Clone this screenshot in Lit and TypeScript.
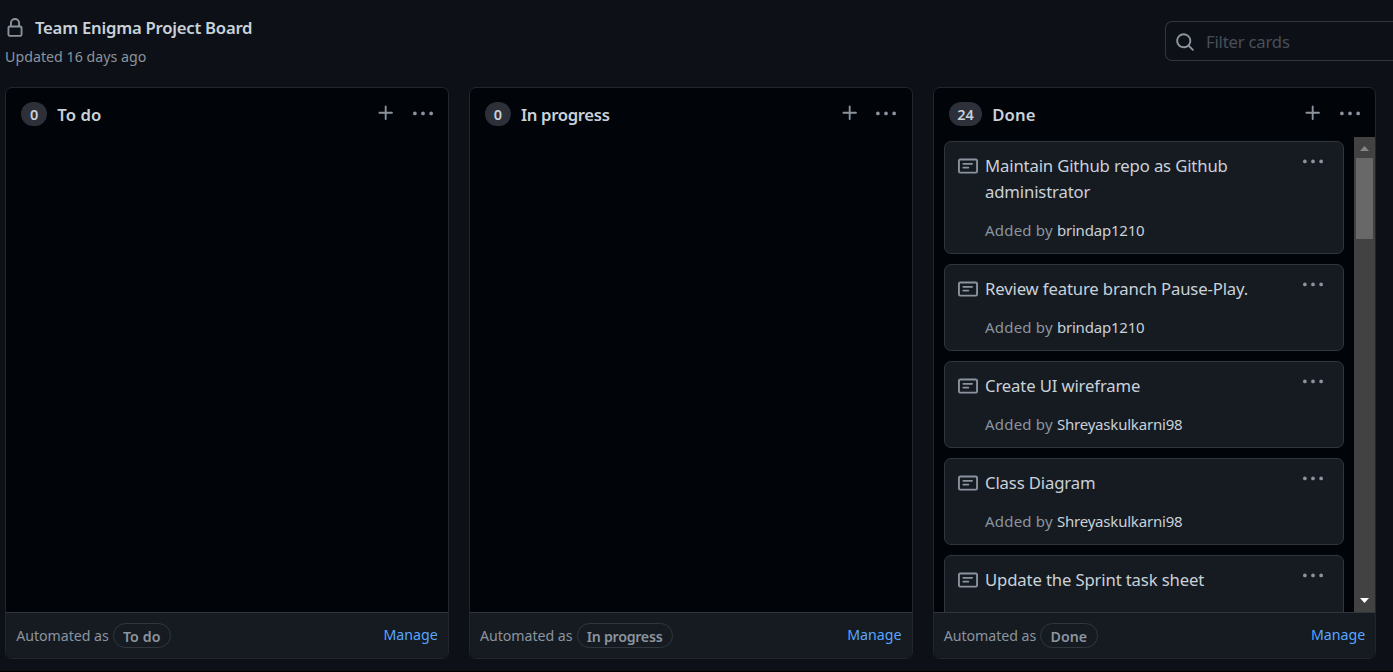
import { LitElement, html, css, svg, nothing } from "lit";
import { customElement, property } from "lit/decorators.js";

const ICONS: Record<string, string> = {
  lock: "M4 4v2h-.25A1.75 1.75 0 002 7.75v5.5c0 .966.784 1.75 1.75 1.75h8.5A1.75 1.75 0 0014 13.25v-5.5A1.75 1.75 0 0012.25 6H12V4a4 4 0 10-8 0zm6.5 2V4a2.5 2.5 0 10-5 0v2h5zM12 7.5h.25a.25.25 0 01.25.25v5.5a.25.25 0 01-.25.25h-8.5a.25.25 0 01-.25-.25v-5.5a.25.25 0 01.25-.25H12z",
  search: "M11.5 7a4.499 4.499 0 11-8.998 0A4.499 4.499 0 0111.5 7zm-.82 4.74a6 6 0 111.06-1.06l3.04 3.04a.75.75 0 11-1.06 1.06l-3.04-3.04z",
  plus: "M7.75 2a.75.75 0 01.75.75V7h4.25a.75.75 0 110 1.5H8.5v4.25a.75.75 0 11-1.5 0V8.5H2.75a.75.75 0 010-1.5H7V2.75A.75.75 0 017.75 2z",
  kebab: "M8 9a1.5 1.5 0 100-3 1.5 1.5 0 000 3zM1.5 9a1.5 1.5 0 100-3 1.5 1.5 0 000 3zm13 0a1.5 1.5 0 100-3 1.5 1.5 0 000 3z",
  note: "M0 3.75C0 2.784.784 2 1.75 2h12.5c.966 0 1.75.784 1.75 1.75v8.5A1.75 1.75 0 0114.25 14H1.75A1.75 1.75 0 010 12.25v-8.5zm1.75-.25a.25.25 0 00-.25.25v8.5c0 .138.112.25.25.25h12.5a.25.25 0 00.25-.25v-8.5a.25.25 0 00-.25-.25H1.75zM3.5 6.25a.75.75 0 01.75-.75h7a.75.75 0 010 1.5h-7a.75.75 0 01-.75-.75zm.75 2.25a.75.75 0 000 1.5h4a.75.75 0 000-1.5h-4z",
};

const icon = (name: string) => html`<svg class="icon ${name}" viewBox="0 0 16 16" width="20" height="20" aria-hidden="true">
  ${svg`<path fill-rule="evenodd" d=${ICONS[name]}></path>`}
</svg>`;

interface Card {
  title: string;
  author?: string;
}

interface Column {
  name: string;
  count: number;
  tracking: number;
  cards: Card[];
}

const COLUMNS: Column[] = [
  { name: "To do", count: 0, tracking: 0.1, cards: [] },
  { name: "In progress", count: 0, tracking: -0.35, cards: [] },
  {
    name: "Done",
    count: 24,
    tracking: 0.05,
    cards: [
      { title: "Maintain Github repo as Github administrator", author: "brindap1210" },
      { title: "Review feature branch Pause-Play.", author: "brindap1210" },
      { title: "Create UI wireframe", author: "Shreyaskulkarni98" },
      { title: "Class Diagram", author: "Shreyaskulkarni98" },
      { title: "Update the Sprint task sheet" },
    ],
  },
];

const shared = css`
  * { box-sizing: border-box; }
  .icon { display: block; flex: none; fill: #8b949e; }
`;

@customElement("project-card")
class ProjectCard extends LitElement {
  @property({ attribute: false }) card!: Card;

  static styles = [shared, css`
    :host { display: block; flex: none; }
    .card {
      display: flex;
      align-items: flex-start;
      min-height: 87px;
      padding: 10px 20px 8px 13px;
      border: 1px solid #30363d;
      border-radius: 7px;
      background: #161b22;
    }
    .note { margin-top: 4px; }
    .body { flex: 1; padding: 1px 0 0 7.25px; }
    .title { padding-right: 40px; font-size: 16.7px; line-height: 26px; letter-spacing: -0.14px; color: #c9d1d9; }
    .meta { margin-top: 14px; font-size: 15px; line-height: 22px; padding-bottom: 4px; letter-spacing: 0.2px; color: #8b949e; white-space: nowrap; }
    .author { letter-spacing: -0.2px; color: #c9d1d9; }
  `];

  render() {
    return html`<article class="card">
      ${icon("note")}
      <div class="body">
        <div class="title">${this.card.title}</div>
        ${this.card.author
          ? html`<div class="meta">Added by <span class="author">${this.card.author}</span></div>`
          : nothing}
      </div>
      ${icon("kebab")}
    </article>`;
  }
}

@customElement("project-column")
class ProjectColumn extends LitElement {
  @property({ attribute: false }) column!: Column;

  static styles = [shared, css`
    :host { display: block; flex: none; width: 443.5px; height: 572px; }
    .column {
      display: flex;
      flex-direction: column;
      height: 100%;
      border: 1px solid #21262d;
      border-radius: 7px;
      background: #010409;
      overflow: hidden;
    }
    .head { display: flex; flex: none; align-items: flex-start; height: 49px; padding: 14px 15px 0; }
    .count {
      min-width: 26px;
      height: 24px;
      padding: 0 8.5px;
      border-radius: 12px;
      background: #2d3039;
      font-size: 14.5px;
      font-weight: 600;
      line-height: 24px;
      text-align: center;
      color: #c9d1d9;
    }
    .name { flex: 1; padding-left: 10px; font-size: 16.7px; font-weight: 600; line-height: 26px; color: #c9d1d9; }
    .head .plus { margin-top: 1px; margin-right: 16.75px; }
    .head .kebab { margin-top: 2px; margin-right: 0.15px; }
    .scroll { display: flex; flex: 1; min-height: 0; }
    .list { display: flex; flex: 1; flex-direction: column; gap: 10px; min-height: 0; padding: 4px 10px 0; overflow: hidden; }
    .bar { display: flex; flex: none; flex-direction: column; align-items: center; width: 21px; background: #424242; }
    .arrow { display: block; flex: none; }
    .up { fill: #868686; }
    .down { fill: #fff; margin-top: auto; }
    .thumb { width: 17px; height: 81px; background: #686868; }
    .foot {
      display: flex;
      flex: none;
      align-items: flex-start;
      height: 46px;
      padding: 10px 10px 0;
      border-top: 1px solid #30363d;
      background: #161b22;
      font-size: 14.2px;
      line-height: 26px;
      color: #8b949e;
    }
    .auto { letter-spacing: -0.05px; }
    .pill {
      height: 25px;
      margin-left: 4.25px;
      padding: 0 9.5px 0 9px;
      border: 1px solid #30363d;
      border-radius: 13px;
      font-weight: 600;
      line-height: 25px;
    }
    .manage { margin-left: auto; line-height: 24px; color: #58a6ff; }
  `];

  render() {
    const c = this.column;
    const tracking = (scale: number) => `letter-spacing: ${c.tracking * scale}px`;
    return html`<section class="column">
      <header class="head">
        <span class="count">${c.count}</span>
        <span class="name" style=${tracking(1)}>${c.name}</span>
        ${icon("plus")}${icon("kebab")}
      </header>
      <div class="scroll">
        <div class="list">
          ${c.cards.map((card) => html`<project-card .card=${card}></project-card>`)}
        </div>
        ${c.cards.length
          ? html`<div class="bar">
              <svg class="arrow up" width="21" height="21" viewBox="0 0 21 21"><path d="M6 14h9L10.5 9z"></path></svg>
              <div class="thumb"></div>
              <svg class="arrow down" width="21" height="21" viewBox="0 0 21 21"><path d="M6 7h9l-4.500 5z"></path></svg>
            </div>`
          : nothing}
      </div>
      <footer class="foot">
        <span class="auto">Automated as</span>
        <span class="pill" style=${tracking(0.75)}>${c.name}</span>
        <span class="manage">Manage</span>
      </footer>
    </section>`;
  }
}

@customElement("app-root")
class AppRoot extends LitElement {
  static styles = [shared, css`
    :host {
      display: flex;
      flex-direction: column;
      width: 100%;
      height: 672px;
      overflow: hidden;
      border-bottom: 1px solid #000;
      box-sizing: border-box;
      background: #0d1117;
      font-family: "Noto Sans", "Open Sans", sans-serif;
    }
    .top { display: flex; flex: none; justify-content: space-between; height: 87px; padding-left: 5px; }
    .heading { display: flex; align-items: flex-start; gap: 10px; padding-top: 14px; }
    .heading .lock { margin-top: 4px; }
    .title { font-size: 16.7px; font-weight: 600; line-height: 27px; letter-spacing: -0.24px; color: #c9d1d9; }
    .updated { margin-top: 4px; font-size: 14.2px; line-height: 23px; letter-spacing: 0.03px; color: #8b949e; }
    .filter {
      display: flex;
      align-items: center;
      gap: 11px;
      width: 228px;
      height: 40px;
      margin-top: 21px;
      padding-left: 9px;
      border: 1px solid #30363d;
      border-right: 0;
      border-radius: 7px 0 0 7px;
      font-size: 16.7px;
      letter-spacing: -0.2px;
      color: #484f58;
    }
    .search { margin-top: 1px; }
    .board { display: flex; flex: none; gap: 20.25px; padding-left: 5.25px; }
  `];

  render() {
    return html`
      <div class="top">
        <div class="info">
          <div class="heading">${icon("lock")}<span class="title">Team Enigma Project Board</span></div>
          <div class="updated">Updated 16 days ago</div>
        </div>
        <div class="filter">${icon("search")}<span class="hint">Filter cards</span></div>
      </div>
      <main class="board">
        ${COLUMNS.map((column) => html`<project-column .column=${column}></project-column>`)}
      </main>`;
  }
}
